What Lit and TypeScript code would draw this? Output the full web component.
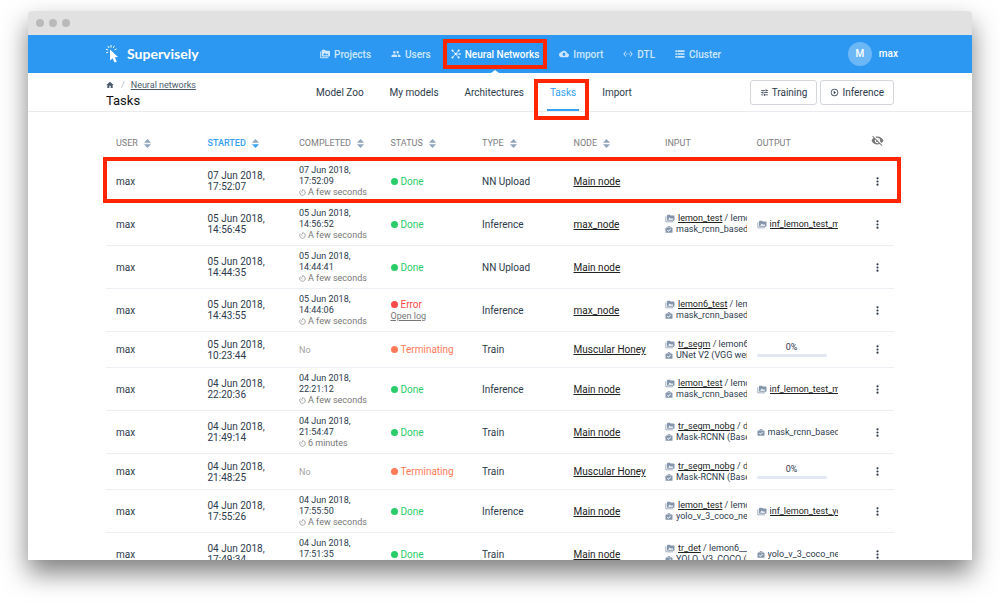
import { LitElement, html, css, svg, nothing } from "lit";
import { customElement, property } from "lit/decorators.js";
import { classMap } from "lit/directives/class-map.js";

const ICONS: Record<string, unknown> = {
  media: svg`<path d="M2 6H0v5h.01L0 20c0 1.1.9 2 2 2h18v-2H2V6zm20-2h-8l-2-2H6c-1.1 0-1.99.9-1.99 2L4 16c0 1.1.9 2 2 2h16c1.1 0 2-.9 2-2V6c0-1.1-.9-2-2-2zM7 15l4.5-6 3.5 4.51 2.5-3.01L21 15H7z"/>`,
  people: svg`<path d="M16 11c1.66 0 2.99-1.34 2.99-3S17.66 5 16 5c-1.66 0-3 1.34-3 3s1.34 3 3 3zm-8 0c1.66 0 2.99-1.34 2.99-3S9.66 5 8 5C6.34 5 5 6.34 5 8s1.34 3 3 3zm0 2c-2.33 0-7 1.17-7 3.5V19h14v-2.5c0-2.33-4.67-3.5-7-3.5zm8 0c-.29 0-.62.02-.97.05 1.16.84 1.97 1.97 1.97 3.45V19h6v-2.5c0-2.33-4.67-3.5-7-3.5z"/>`,
  network: svg`<g fill="none" stroke="currentColor" stroke-width="1.800"><path d="M4 4l7 8L4 20M11 12l7-8M11 12l7 8M11 12h10"/></g><circle cx="3.500" cy="3.500" r="2.300"/><circle cx="3.500" cy="20.500" r="2.300"/><circle cx="18.500" cy="3.500" r="2.300"/><circle cx="18.500" cy="20.500" r="2.300"/><circle cx="21.800" cy="12" r="2"/><circle cx="11" cy="12" r="2.400"/>`,
  cloud: svg`<path d="M19.35 10.04C18.67 6.59 15.64 4 12 4 9.11 4 6.6 5.64 5.35 8.04 2.34 8.36 0 10.91 0 14c0 3.31 2.69 6 6 6h13c2.76 0 5-2.24 5-5 0-2.64-2.05-4.78-4.65-4.96zM14 13v4h-4v-4H7l5-5 5 5h-3z"/>`,
  ethernet: svg`<path d="M7.77 6.76L6.23 5.48.82 12l5.41 6.52 1.54-1.28L3.42 12l4.35-5.24zM7 13h2v-2H7v2zm10-2h-2v2h2v-2zm-6 2h2v-2h-2v2zm6.770-7.520l-1.540 1.280L20.580 12l-4.350 5.240 1.540 1.280L23.180 12l-5.410-6.520z"/>`,
  storage: svg`<path d="M1 3h4v4H1zM6 3h17v4H6zM1 10h4v4H1zM6 10h17v4H6zM1 17h4v4H1zM6 17h17v4H6z"/>`,
  tune: svg`<path d="M3 17v2h6v-2H3zM3 5v2h10V5H3zm10 16v-2h8v-2h-8v-2h-2v6h2zM7 9v2H3v2h4v2h2V9H7zm14 4v-2H11v2h10zm-6-4h2V7h4V5h-4V3h-2v6z"/>`,
  play: svg`<path d="M10 16.500l6-4.500-6-4.500v9zM12 2C6.480 2 2 6.480 2 12s4.480 10 10 10 10-4.480 10-10S17.520 2 12 2zm0 18c-4.410 0-8-3.590-8-8s3.590-8 8-8 8 3.590 8 8-3.590 8-8 8z"/>`,
  home: svg`<path d="M10 21v-7h4v7h6v-9h3L12 2 1 12h3v9z"/>`,
  hidden: svg`<path d="M12 7c2.760 0 5 2.240 5 5 0 .65-.13 1.260-.36 1.830l2.920 2.920c1.510-1.260 2.700-2.890 3.430-4.750-1.730-4.390-6-7.500-11-7.500-1.400 0-2.740.25-3.980.7l2.160 2.160C10.740 7.130 11.350 7 12 7zM2 4.270l2.280 2.280.46.46C3.080 8.300 1.780 10.020 1 12c1.730 4.390 6 7.500 11 7.500 1.550 0 3.030-.3 4.380-.84l.42.42L19.730 22 21 20.730 3.270 3 2 4.270zM7.530 9.800l1.550 1.550c-.05.21-.08.43-.08.65 0 1.660 1.340 3 3 3 .22 0 .44-.03.65-.08l1.550 1.550c-.67.33-1.410.53-2.200.53-2.760 0-5-2.240-5-5 0-.79.2-1.530.53-2.200zm4.310-.78l3.150 3.150.02-.16c0-1.660-1.340-3-3-3l-.17.01z"/>`,
  model: svg`<path fill-rule="evenodd" d="M8 6V4c0-1.500 1-2.500 2.500-2.500h3C15 1.500 16 2.500 16 4v2h4.500C21.600 6 22.500 6.900 22.500 8v12c0 1.100-.9 2-2 2h-17c-1.100 0-2-.9-2-2V8c0-1.100.9-2 2-2H8zm2 0h4V4h-4v2zm.500 13l7.500-7.500-1.600-1.600-5.900 5.900-2.700-2.700-1.600 1.600 4.300 4.300z"/>`,
  clock: svg`<g fill="none" stroke="currentColor" stroke-width="2.200"><path d="M12 2.500a9.500 9.500 0 1 1-7 3M12 2.500V7M12 13L6.500 8"/></g>`,
  dots: svg`<circle cx="12" cy="3.500" r="2.900"/><circle cx="12" cy="12" r="2.900"/><circle cx="12" cy="20.500" r="2.900"/>`,
};

const icon = (name: string) =>
  html`<svg class="icon ${name}" viewBox="0 0 24 24" fill="currentColor" aria-hidden="true">${ICONS[name]}</svg>`;

const shared = css`
  * { box-sizing: border-box; }
  a { color: inherit; text-decoration: none; }
  button { font: inherit; color: inherit; background: none; border: 0; padding: 0; cursor: pointer; }
  .icon { display: block; flex: none; width: 10px; height: 10px; }
  .callout { position: absolute; border: 4px solid #ff2600; pointer-events: none; z-index: 3; }
`;

@customElement("app-header")
export class AppHeader extends LitElement {
  static styles = [shared, css`
    :host { display: block; background: #2d98f1; color: #fff; }
    .bar { display: flex; align-items: center; height: 38px; padding: 0 74px 0 78px; }
    .logo { display: flex; align-items: center; gap: 8px; width: 214px; font: 700 14px/20px Lato, sans-serif; }
    .logo svg { width: 13px; height: 18px; }
    nav { display: flex; gap: 20px; height: 100%; }
    nav a { display: flex; align-items: center; gap: 4px; position: relative; color: #cfe7fc; font-weight: 500; white-space: nowrap; }
    nav a span { padding-top: 1px; }
    nav a.active { color: #fff; }
    nav a.active::after {
      content: ""; position: absolute; bottom: 0; left: 50%; margin-left: -4px;
      border: 4px solid transparent; border-top: 0; border-bottom: 3px solid #fff;
    }
    nav .callout { inset: 4px -8px; }
    .user { display: flex; align-items: center; gap: 7px; margin-left: auto; font-weight: 500; }
    .avatar { width: 24px; height: 24px; border-radius: 50%; background: #6cb7f5; line-height: 24px; text-align: center; }
  `];

  items = [
    ["media", "Projects"], ["people", "Users"], ["network", "Neural Networks"],
    ["cloud", "Import"], ["ethernet", "DTL"], ["storage", "Cluster"],
  ];

  render() {
    return html`<header class="bar">
      <a class="logo" href="#">
        <svg viewBox="0 0 13 18" aria-hidden="true">
          <path fill="#fff" d="M4 4.500l8 7.500-3.200.3 2 4.200-2.300 1-1.900-4.300L4 15.500z"/>
          <path fill="none" stroke="#fff" d="M5 0v2.600M1.800 1l1.300 2M8.400.8L7.200 3M0 4.300l2.200.7M.2 7.800l2-.6M8.600 4.900l2-1"/>
        </svg>
        <span>Supervisely</span>
      </a>
      <nav>
        ${this.items.map(([glyph, label]) => {
          const active = label === "Neural Networks";
          return html`<a href="#" class=${classMap({ active })}>${icon(glyph)}<span>${label}</span>${active ? html`<i class="callout"></i>` : nothing}</a>`;
        })}
      </nav>
      <a class="user" href="#"><span class="avatar">M</span><span>max</span></a>
    </header>`;
  }
}

@customElement("app-toolbar")
export class AppToolbar extends LitElement {
  static styles = [shared, css`
    :host { display: block; border-bottom: 1px solid #e9ebee; color: #2c3a4b; }
    .bar { display: flex; align-items: center; height: 38px; width: 788px; max-width: 94%; margin: 0 auto; }
    .title { width: 207px; padding-top: 4px; }
    .crumbs { display: flex; align-items: center; font-size: 9px; line-height: 11px; color: #4a5a6b; }
    .crumbs .icon { width: 8px; height: 8px; }
    .crumbs .slash { margin: 0 6px 0 7px; color: #b4bcc5; }
    .crumbs .link { text-decoration: underline; }
    h1 { margin: 2px 0 0; font-size: 13px; line-height: 16px; font-weight: 400; color: #111; }
    nav { display: flex; gap: 20px; height: 100%; }
    nav a { position: relative; display: flex; align-items: center; padding: 1px 3px 0; white-space: nowrap; }
    nav a.active { color: #35a0f4; }
    nav a.active::after { content: ""; position: absolute; left: 0; right: 0; bottom: 0; height: 2px; background: #35a0f4; }
    nav .callout { inset: 6px -10px -9px -13px; }
    .actions { display: flex; gap: 3px; margin-left: auto; }
    .actions button {
      display: flex; align-items: center; gap: 3px; height: 25px; padding: 0 9px;
      border: 1px solid #d3d6da; border-radius: 3px;
    }
    .actions .icon { width: 9px; height: 9px; }
    .actions span { padding-top: 1px; }
  `];

  tabs = ["Model Zoo", "My models", "Architectures", "Tasks", "Import"];

  render() {
    return html`<div class="bar">
      <div class="title">
        <div class="crumbs"><a href="#" aria-label="Home">${icon("home")}</a><span class="slash">/</span><a class="link" href="#">Neural networks</a></div>
        <h1>Tasks</h1>
      </div>
      <nav>
        ${this.tabs.map((label) => {
          const active = label === "Tasks";
          return html`<a href="#" class=${classMap({ active })}>${label}${active ? html`<i class="callout"></i>` : nothing}</a>`;
        })}
      </nav>
      <div class="actions">
        <button type="button">${icon("tune")}<span>Training</span></button>
        <button type="button">${icon("play")}<span>Inference</span></button>
      </div>
    </div>`;
  }
}

interface Output { kind: "project" | "model" | "progress"; text: string; }
interface Task {
  started: [string, string];
  completed?: [string, string, string];
  status: "Done" | "Error" | "Terminating";
  type: string;
  node: string;
  input?: [string, string, string];
  output?: Output;
  highlighted?: boolean;
}

const few = "A few seconds";
const TASKS: Task[] = [
  { started: ["07 Jun 2018,", "17:52:07"], completed: ["07 Jun 2018,", "17:52:09", few], status: "Done", type: "NN Upload", node: "Main node", highlighted: true },
  { started: ["05 Jun 2018,", "14:56:45"], completed: ["05 Jun 2018,", "14:56:52", few], status: "Done", type: "Inference", node: "max_node", input: ["lemon_test", "lemon_test", "mask_rcnn_based"], output: { kind: "project", text: "inf_lemon_test_mask" } },
  { started: ["05 Jun 2018,", "14:44:35"], completed: ["05 Jun 2018,", "14:44:41", few], status: "Done", type: "NN Upload", node: "Main node" },
  { started: ["05 Jun 2018,", "14:43:55"], completed: ["05 Jun 2018,", "14:44:06", few], status: "Error", type: "Inference", node: "max_node", input: ["lemon6_test", "lemon6", "mask_rcnn_based"] },
  { started: ["05 Jun 2018,", "10:23:44"], status: "Terminating", type: "Train", node: "Muscular Honey", input: ["tr_segm", "lemon6_test", "UNet V2 (VGG weights)"], output: { kind: "progress", text: "0%" } },
  { started: ["04 Jun 2018,", "22:20:36"], completed: ["04 Jun 2018,", "22:21:12", few], status: "Done", type: "Inference", node: "Main node", input: ["lemon_test", "lemon_test", "mask_rcnn_based"], output: { kind: "project", text: "inf_lemon_test_mask" } },
  { started: ["04 Jun 2018,", "21:49:14"], completed: ["04 Jun 2018,", "21:54:47", "6 minutes"], status: "Done", type: "Train", node: "Main node", input: ["tr_segm_nobg", "ds", "Mask-RCNN (Base)"], output: { kind: "model", text: "mask_rcnn_based" } },
  { started: ["04 Jun 2018,", "21:48:25"], status: "Terminating", type: "Train", node: "Muscular Honey", input: ["tr_segm_nobg", "ds", "Mask-RCNN (Base)"], output: { kind: "progress", text: "0%" } },
  { started: ["04 Jun 2018,", "17:55:26"], completed: ["04 Jun 2018,", "17:55:50", few], status: "Done", type: "Inference", node: "Main node", input: ["lemon_test", "lemon_test", "yolo_v_3_coco_new"], output: { kind: "project", text: "inf_lemon_test_yolo" } },
  { started: ["04 Jun 2018,", "17:49:34"], completed: ["04 Jun 2018,", "17:51:35", few], status: "Done", type: "Train", node: "Main node", input: ["tr_det", "lemon6__", "YOLO_V3_COCO (COCO)"], output: { kind: "model", text: "yolo_v_3_coco_new" } },
];

@customElement("task-table")
export class TaskTable extends LitElement {
  static styles = [shared, css`
    :host { display: block; width: 788px; max-width: 94%; margin: 0 auto; color: #2c3a4b; }
    table { width: 100%; table-layout: fixed; border-collapse: separate; border-spacing: 0; }
    .menu-col { width: 56px; }
    th { height: 48px; padding: 14px 0 0 10px; text-align: left; vertical-align: middle; font-size: 9px; line-height: 11px; font-weight: 400; color: #7d7d7d; white-space: nowrap; }
    th button { display: flex; align-items: center; gap: 6px; }
    th svg.sort { width: 7px; height: 9px; fill: #8fa3bb; }
    th.sorted { color: #35a0f4; font-weight: 500; }
    th.sorted .down { fill: #35a0f4; }
    th .icon { width: 13px; height: 13px; }
    th.menu { padding: 9px 0 0 22px; color: #777; }
    td.menu { padding-left: 22px; }
    td.menu .icon { width: 9px; height: 9px; }
    .menu button { display: block; margin: 0 auto; }
    tr { position: relative; }
    td { height: 36px; padding: 4px 0 4px 10px; vertical-align: middle; border-bottom: 1px solid #ecf0f4; line-height: 11px; white-space: nowrap; }
    .callout { inset: -3px -7px 0 -3px; }
    .small { padding-top: 1px; font-size: 9px; }
    .duration { display: flex; align-items: center; gap: 2px; color: #777; }
    .duration .icon { width: 7px; height: 7px; }
    .none { color: #a3a3a3; font-size: 9px; }
    .status { display: flex; align-items: center; gap: 3px; }
    .status::before { content: ""; width: 7px; height: 7px; border-radius: 50%; background: currentColor; }
    .done { color: #2bcd69; }
    .error { color: #ff4949; }
    .terminating { color: #ff7a59; }
    .log { font-size: 9px; color: #777; text-decoration: underline; }
    .node { color: #222; text-decoration: underline; }
    .ref { display: flex; align-items: center; gap: 3px; font-size: 9px; overflow: hidden; }
    .ref .icon { color: #8496ab; }
    .ref .media { width: 10px; height: 9px; }
    .ref .model { width: 8px; height: 9px; }
    .clip { overflow: hidden; flex: 1; }
    .clip a { color: #222; text-decoration: underline; }
    .progress { display: block; width: 70px; font-size: 9px; text-align: center; }
    .track { display: block; height: 3px; margin-top: 1px; border-radius: 2px; background: #e2e8f1; }
  `];

  @property({ attribute: false }) tasks: Task[] = TASKS;

  columns = ["USER", "STARTED", "COMPLETED", "STATUS", "TYPE", "NODE"];

  head(label: string) {
    return html`<th scope="col" class=${classMap({ sorted: label === "STARTED" })}>
      <button type="button">${label}<svg class="sort" viewBox="0 0 7 9" aria-hidden="true"><path d="M3.500 0L7 3.800H0z"/><path class="down" d="M0 5.200h7L3.500 9z"/></svg></button>
    </th>`;
  }

  output(o?: Output) {
    if (!o) return nothing;
    if (o.kind === "progress") {
      return html`<span class="progress">${o.text}<span class="track"></span></span>`;
    }
    return o.kind === "project"
      ? html`<div class="ref">${icon("media")}<span class="clip"><a href="#">${o.text}</a></span></div>`
      : html`<div class="ref">${icon("model")}<span class="clip">${o.text}</span></div>`;
  }

  row(t: Task) {
    return html`<tr>
      <td>max${t.highlighted ? html`<i class="callout"></i>` : nothing}</td>
      <td>${t.started[0]}<br />${t.started[1]}</td>
      <td>${t.completed
        ? html`<div class="small">${t.completed[0]}<br />${t.completed[1]}<div class="duration">${icon("clock")}${t.completed[2]}</div></div>`
        : html`<span class="none">No</span>`}</td>
      <td><div class="status ${t.status.toLowerCase()}">${t.status}</div>${t.status === "Error" ? html`<a class="log" href="#">Open log</a>` : nothing}</td>
      <td>${t.type}</td>
      <td><a class="node" href="#">${t.node}</a></td>
      <td>${t.input
        ? html`<div class="ref">${icon("media")}<span class="clip"><a href="#">${t.input[0]}</a> / ${t.input[1]}</span></div>
            <div class="ref">${icon("model")}<span class="clip">${t.input[2]}</span></div>`
        : nothing}</td>
      <td>${this.output(t.output)}</td>
      <td class="menu"><button type="button" aria-label="Task menu">${icon("dots")}</button></td>
    </tr>`;
  }

  render() {
    return html`<table>
      <colgroup><col span="8" /><col class="menu-col" /></colgroup>
      <thead><tr>
        ${this.columns.map((c) => this.head(c))}
        <th scope="col">INPUT</th>
        <th scope="col">OUTPUT</th>
        <th scope="col" class="menu"><button type="button" aria-label="Toggle hidden tasks">${icon("hidden")}</button></th>
      </tr></thead>
      <tbody>${this.tasks.map((t) => this.row(t))}</tbody>
    </table>`;
  }
}

@customElement("app-root")
export class AppRoot extends LitElement {
  static styles = css`
    :host { display: flex; box-sizing: border-box; height: 100vh; padding: 11px 28px 49px; overflow: hidden; background: #fff; font: 400 10px/12px Roboto, sans-serif; }
    .window { flex: 1; min-width: 0; display: flex; flex-direction: column; overflow: hidden; border-radius: 4px 4px 0 0; background: #fff; box-shadow: 0 13px 26px rgba(0, 0, 0, 0.5); }
    .window > * { flex: none; }
    .chrome { display: flex; align-items: center; gap: 5px; height: 24px; padding-left: 8px; background: #e1e1e1; }
    .chrome i { width: 8px; height: 8px; border-radius: 50%; background: #bababa; }
  `;

  render() {
    return html`<div class="window">
      <div class="chrome"><i></i><i></i><i></i></div>
      <app-header></app-header>
      <app-toolbar></app-toolbar>
      <task-table></task-table>
    </div>`;
  }
}
